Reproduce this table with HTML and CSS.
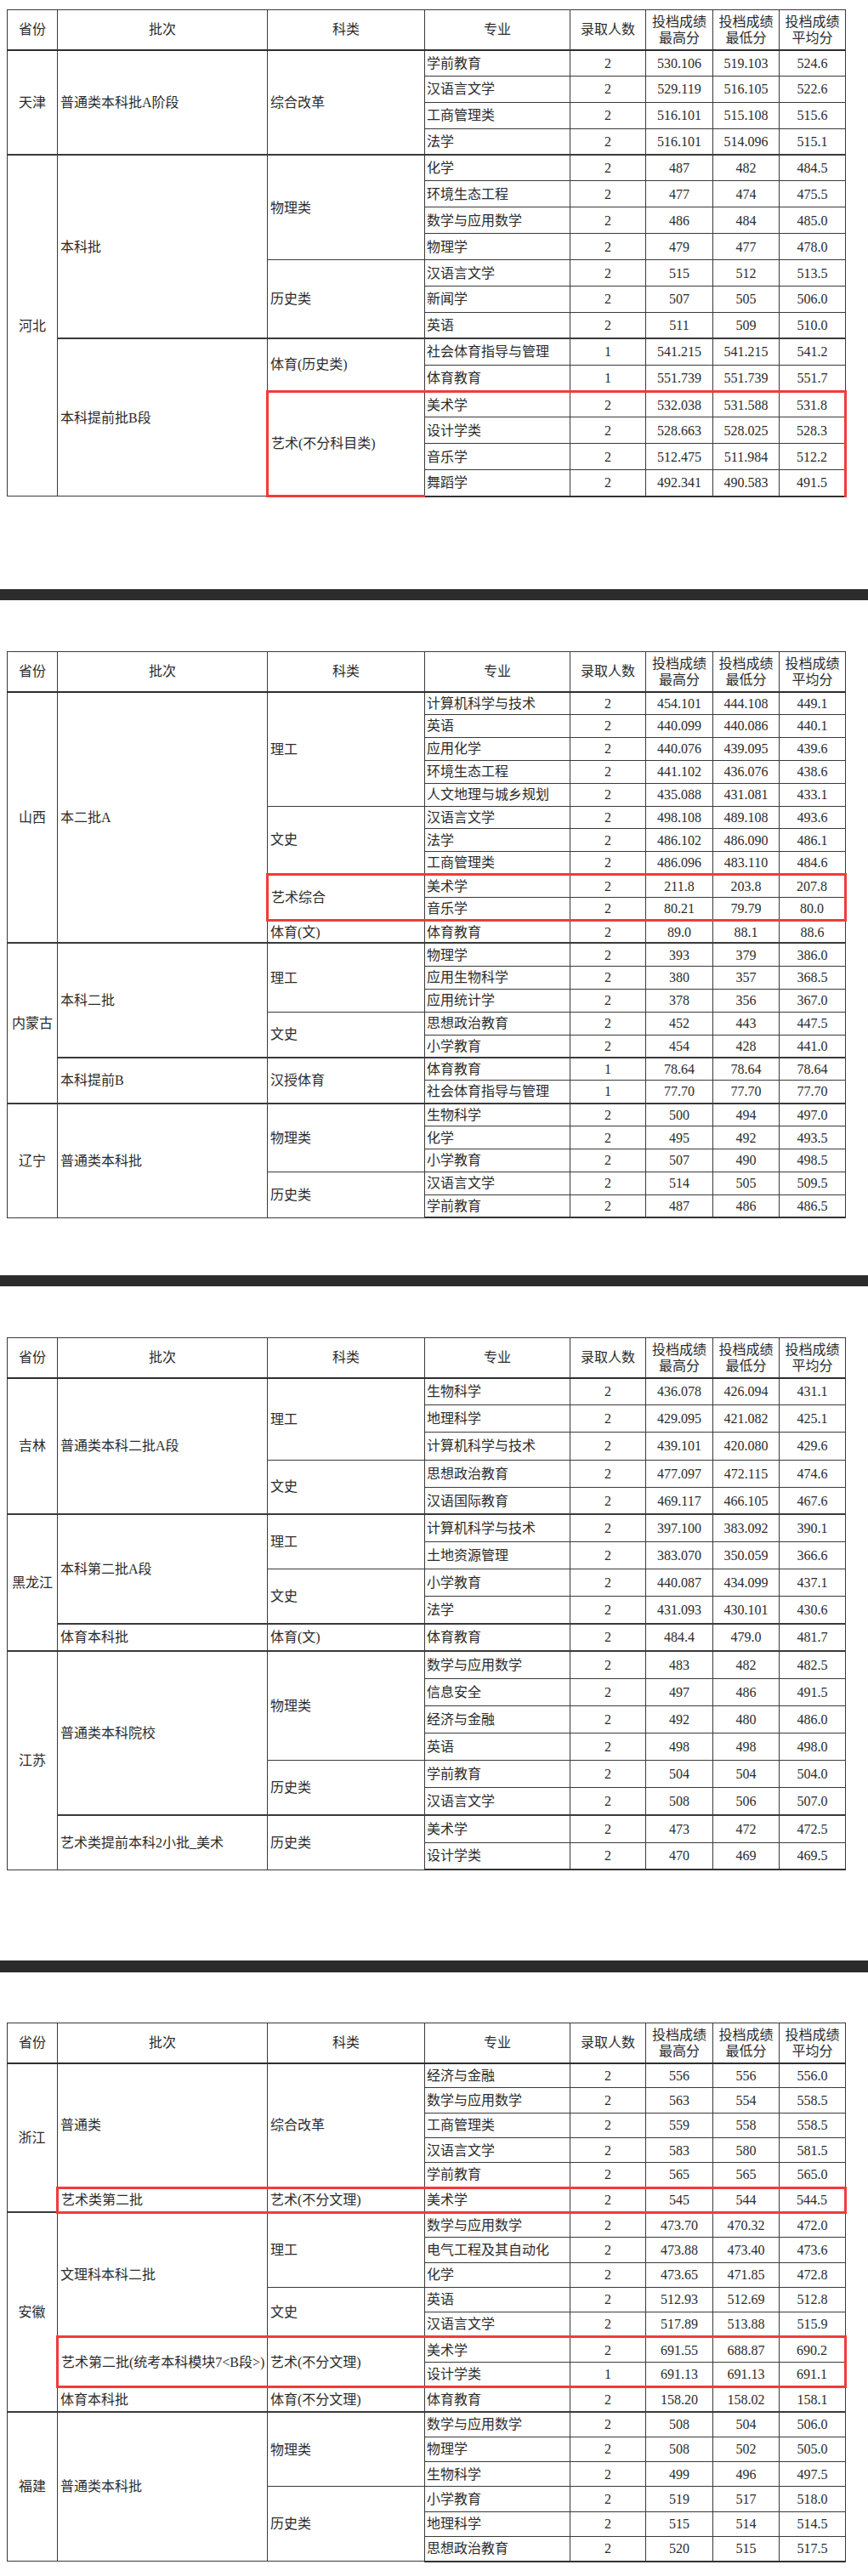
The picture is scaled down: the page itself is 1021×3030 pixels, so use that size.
FILE: index.html
```html
<!DOCTYPE html>
<html lang="zh-CN">
<head>
<meta charset="utf-8">
<title>各省录取分数</title>
<link rel="stylesheet" href="styles.css">
</head>
<body>
<main class="page">

<section class="sheet sheet-1">
<table class="score t1">
<colgroup><col class="w-prov"><col class="w-batch"><col class="w-type"><col class="w-major"><col class="w-num"><col class="w-s1"><col class="w-s2"><col class="w-s3"></colgroup>
<thead><tr><th>省份</th><th>批次</th><th>科类</th><th>专业</th><th>录取人数</th><th>投档成绩<br>最高分</th><th>投档成绩<br>最低分</th><th>投档成绩<br>平均分</th></tr></thead>
<tbody>
<tr><td class="c" rowspan="4">天津</td><td rowspan="4">普通类本科批A阶段</td><td rowspan="4">综合改革</td><td class="m">学前教育</td><td class="c">2</td><td class="c">530.106</td><td class="c">519.103</td><td class="c">524.6</td></tr>
<tr><td class="m">汉语言文学</td><td class="c">2</td><td class="c">529.119</td><td class="c">516.105</td><td class="c">522.6</td></tr>
<tr><td class="m">工商管理类</td><td class="c">2</td><td class="c">516.101</td><td class="c">515.108</td><td class="c">515.6</td></tr>
<tr><td class="m">法学</td><td class="c">2</td><td class="c">516.101</td><td class="c">514.096</td><td class="c">515.1</td></tr>
<tr class="grp"><td class="c" rowspan="13">河北</td><td rowspan="7">本科批</td><td rowspan="4">物理类</td><td class="m">化学</td><td class="c">2</td><td class="c">487</td><td class="c">482</td><td class="c">484.5</td></tr>
<tr><td class="m">环境生态工程</td><td class="c">2</td><td class="c">477</td><td class="c">474</td><td class="c">475.5</td></tr>
<tr><td class="m">数学与应用数学</td><td class="c">2</td><td class="c">486</td><td class="c">484</td><td class="c">485.0</td></tr>
<tr><td class="m">物理学</td><td class="c">2</td><td class="c">479</td><td class="c">477</td><td class="c">478.0</td></tr>
<tr><td rowspan="3">历史类</td><td class="m">汉语言文学</td><td class="c">2</td><td class="c">515</td><td class="c">512</td><td class="c">513.5</td></tr>
<tr><td class="m">新闻学</td><td class="c">2</td><td class="c">507</td><td class="c">505</td><td class="c">506.0</td></tr>
<tr><td class="m">英语</td><td class="c">2</td><td class="c">511</td><td class="c">509</td><td class="c">510.0</td></tr>
<tr class="grp"><td rowspan="6">本科提前批B段</td><td rowspan="2">体育(历史类)</td><td class="m">社会体育指导与管理</td><td class="c">1</td><td class="c">541.215</td><td class="c">541.215</td><td class="c">541.2</td></tr>
<tr><td class="m">体育教育</td><td class="c">1</td><td class="c">551.739</td><td class="c">551.739</td><td class="c">551.7</td></tr>
<tr><td class="rt rb rl" rowspan="4">艺术(不分科目类)</td><td class="m rt">美术学</td><td class="c rt">2</td><td class="c rt">532.038</td><td class="c rt">531.588</td><td class="c rt rr">531.8</td></tr>
<tr><td class="m">设计学类</td><td class="c">2</td><td class="c">528.663</td><td class="c">528.025</td><td class="c rr">528.3</td></tr>
<tr><td class="m">音乐学</td><td class="c">2</td><td class="c">512.475</td><td class="c">511.984</td><td class="c rr">512.2</td></tr>
<tr><td class="m rb">舞蹈学</td><td class="c rb">2</td><td class="c rb">492.341</td><td class="c rb">490.583</td><td class="c rb rr">491.5</td></tr>
</tbody>
</table>
</section>

<div class="divider divider-1"></div>

<section class="sheet sheet-2">
<table class="score t2">
<colgroup><col class="w-prov"><col class="w-batch"><col class="w-type"><col class="w-major"><col class="w-num"><col class="w-s1"><col class="w-s2"><col class="w-s3"></colgroup>
<thead><tr><th>省份</th><th>批次</th><th>科类</th><th>专业</th><th>录取人数</th><th>投档成绩<br>最高分</th><th>投档成绩<br>最低分</th><th>投档成绩<br>平均分</th></tr></thead>
<tbody>
<tr><td class="c" rowspan="11">山西</td><td rowspan="11">本二批A</td><td rowspan="5">理工</td><td class="m">计算机科学与技术</td><td class="c">2</td><td class="c">454.101</td><td class="c">444.108</td><td class="c">449.1</td></tr>
<tr><td class="m">英语</td><td class="c">2</td><td class="c">440.099</td><td class="c">440.086</td><td class="c">440.1</td></tr>
<tr><td class="m">应用化学</td><td class="c">2</td><td class="c">440.076</td><td class="c">439.095</td><td class="c">439.6</td></tr>
<tr><td class="m">环境生态工程</td><td class="c">2</td><td class="c">441.102</td><td class="c">436.076</td><td class="c">438.6</td></tr>
<tr><td class="m">人文地理与城乡规划</td><td class="c">2</td><td class="c">435.088</td><td class="c">431.081</td><td class="c">433.1</td></tr>
<tr><td rowspan="3">文史</td><td class="m">汉语言文学</td><td class="c">2</td><td class="c">498.108</td><td class="c">489.108</td><td class="c">493.6</td></tr>
<tr><td class="m">法学</td><td class="c">2</td><td class="c">486.102</td><td class="c">486.090</td><td class="c">486.1</td></tr>
<tr><td class="m">工商管理类</td><td class="c">2</td><td class="c">486.096</td><td class="c">483.110</td><td class="c">484.6</td></tr>
<tr><td class="rt rb rl" rowspan="2">艺术综合</td><td class="m rt">美术学</td><td class="c rt">2</td><td class="c rt">211.8</td><td class="c rt">203.8</td><td class="c rt rr">207.8</td></tr>
<tr><td class="m rb">音乐学</td><td class="c rb">2</td><td class="c rb">80.21</td><td class="c rb">79.79</td><td class="c rb rr">80.0</td></tr>
<tr><td>体育(文)</td><td class="m">体育教育</td><td class="c">2</td><td class="c">89.0</td><td class="c">88.1</td><td class="c">88.6</td></tr>
<tr class="grp"><td class="c" rowspan="7">内蒙古</td><td rowspan="5">本科二批</td><td rowspan="3">理工</td><td class="m">物理学</td><td class="c">2</td><td class="c">393</td><td class="c">379</td><td class="c">386.0</td></tr>
<tr><td class="m">应用生物科学</td><td class="c">2</td><td class="c">380</td><td class="c">357</td><td class="c">368.5</td></tr>
<tr><td class="m">应用统计学</td><td class="c">2</td><td class="c">378</td><td class="c">356</td><td class="c">367.0</td></tr>
<tr><td rowspan="2">文史</td><td class="m">思想政治教育</td><td class="c">2</td><td class="c">452</td><td class="c">443</td><td class="c">447.5</td></tr>
<tr><td class="m">小学教育</td><td class="c">2</td><td class="c">454</td><td class="c">428</td><td class="c">441.0</td></tr>
<tr class="grp"><td rowspan="2">本科提前B</td><td rowspan="2">汉授体育</td><td class="m">体育教育</td><td class="c">1</td><td class="c">78.64</td><td class="c">78.64</td><td class="c">78.64</td></tr>
<tr><td class="m">社会体育指导与管理</td><td class="c">1</td><td class="c">77.70</td><td class="c">77.70</td><td class="c">77.70</td></tr>
<tr class="grp"><td class="c" rowspan="5">辽宁</td><td rowspan="5">普通类本科批</td><td rowspan="3">物理类</td><td class="m">生物科学</td><td class="c">2</td><td class="c">500</td><td class="c">494</td><td class="c">497.0</td></tr>
<tr><td class="m">化学</td><td class="c">2</td><td class="c">495</td><td class="c">492</td><td class="c">493.5</td></tr>
<tr><td class="m">小学教育</td><td class="c">2</td><td class="c">507</td><td class="c">490</td><td class="c">498.5</td></tr>
<tr><td rowspan="2">历史类</td><td class="m">汉语言文学</td><td class="c">2</td><td class="c">514</td><td class="c">505</td><td class="c">509.5</td></tr>
<tr><td class="m">学前教育</td><td class="c">2</td><td class="c">487</td><td class="c">486</td><td class="c">486.5</td></tr>
</tbody>
</table>
</section>

<div class="divider divider-2"></div>

<section class="sheet sheet-3">
<table class="score t3">
<colgroup><col class="w-prov"><col class="w-batch"><col class="w-type"><col class="w-major"><col class="w-num"><col class="w-s1"><col class="w-s2"><col class="w-s3"></colgroup>
<thead><tr><th>省份</th><th>批次</th><th>科类</th><th>专业</th><th>录取人数</th><th>投档成绩<br>最高分</th><th>投档成绩<br>最低分</th><th>投档成绩<br>平均分</th></tr></thead>
<tbody>
<tr><td class="c" rowspan="5">吉林</td><td rowspan="5">普通类本科二批A段</td><td rowspan="3">理工</td><td class="m">生物科学</td><td class="c">2</td><td class="c">436.078</td><td class="c">426.094</td><td class="c">431.1</td></tr>
<tr><td class="m">地理科学</td><td class="c">2</td><td class="c">429.095</td><td class="c">421.082</td><td class="c">425.1</td></tr>
<tr><td class="m">计算机科学与技术</td><td class="c">2</td><td class="c">439.101</td><td class="c">420.080</td><td class="c">429.6</td></tr>
<tr><td rowspan="2">文史</td><td class="m">思想政治教育</td><td class="c">2</td><td class="c">477.097</td><td class="c">472.115</td><td class="c">474.6</td></tr>
<tr><td class="m">汉语国际教育</td><td class="c">2</td><td class="c">469.117</td><td class="c">466.105</td><td class="c">467.6</td></tr>
<tr class="grp"><td class="c" rowspan="5">黑龙江</td><td rowspan="4">本科第二批A段</td><td rowspan="2">理工</td><td class="m">计算机科学与技术</td><td class="c">2</td><td class="c">397.100</td><td class="c">383.092</td><td class="c">390.1</td></tr>
<tr><td class="m">土地资源管理</td><td class="c">2</td><td class="c">383.070</td><td class="c">350.059</td><td class="c">366.6</td></tr>
<tr><td rowspan="2">文史</td><td class="m">小学教育</td><td class="c">2</td><td class="c">440.087</td><td class="c">434.099</td><td class="c">437.1</td></tr>
<tr><td class="m">法学</td><td class="c">2</td><td class="c">431.093</td><td class="c">430.101</td><td class="c">430.6</td></tr>
<tr class="grp"><td>体育本科批</td><td>体育(文)</td><td class="m">体育教育</td><td class="c">2</td><td class="c">484.4</td><td class="c">479.0</td><td class="c">481.7</td></tr>
<tr class="grp"><td class="c" rowspan="8">江苏</td><td rowspan="6">普通类本科院校</td><td rowspan="4">物理类</td><td class="m">数学与应用数学</td><td class="c">2</td><td class="c">483</td><td class="c">482</td><td class="c">482.5</td></tr>
<tr><td class="m">信息安全</td><td class="c">2</td><td class="c">497</td><td class="c">486</td><td class="c">491.5</td></tr>
<tr><td class="m">经济与金融</td><td class="c">2</td><td class="c">492</td><td class="c">480</td><td class="c">486.0</td></tr>
<tr><td class="m">英语</td><td class="c">2</td><td class="c">498</td><td class="c">498</td><td class="c">498.0</td></tr>
<tr><td rowspan="2">历史类</td><td class="m">学前教育</td><td class="c">2</td><td class="c">504</td><td class="c">504</td><td class="c">504.0</td></tr>
<tr><td class="m">汉语言文学</td><td class="c">2</td><td class="c">508</td><td class="c">506</td><td class="c">507.0</td></tr>
<tr class="grp"><td rowspan="2">艺术类提前本科2小批_美术</td><td rowspan="2">历史类</td><td class="m">美术学</td><td class="c">2</td><td class="c">473</td><td class="c">472</td><td class="c">472.5</td></tr>
<tr><td class="m">设计学类</td><td class="c">2</td><td class="c">470</td><td class="c">469</td><td class="c">469.5</td></tr>
</tbody>
</table>
</section>

<div class="divider divider-3"></div>

<section class="sheet sheet-4">
<table class="score t4">
<colgroup><col class="w-prov"><col class="w-batch"><col class="w-type"><col class="w-major"><col class="w-num"><col class="w-s1"><col class="w-s2"><col class="w-s3"></colgroup>
<thead><tr><th>省份</th><th>批次</th><th>科类</th><th>专业</th><th>录取人数</th><th>投档成绩<br>最高分</th><th>投档成绩<br>最低分</th><th>投档成绩<br>平均分</th></tr></thead>
<tbody>
<tr><td class="c" rowspan="6">浙江</td><td rowspan="5">普通类</td><td rowspan="5">综合改革</td><td class="m">经济与金融</td><td class="c">2</td><td class="c">556</td><td class="c">556</td><td class="c">556.0</td></tr>
<tr><td class="m">数学与应用数学</td><td class="c">2</td><td class="c">563</td><td class="c">554</td><td class="c">558.5</td></tr>
<tr><td class="m">工商管理类</td><td class="c">2</td><td class="c">559</td><td class="c">558</td><td class="c">558.5</td></tr>
<tr><td class="m">汉语言文学</td><td class="c">2</td><td class="c">583</td><td class="c">580</td><td class="c">581.5</td></tr>
<tr><td class="m">学前教育</td><td class="c">2</td><td class="c">565</td><td class="c">565</td><td class="c">565.0</td></tr>
<tr><td class="rt rb rl">艺术类第二批</td><td class="rt rb">艺术(不分文理)</td><td class="m rt rb">美术学</td><td class="c rt rb">2</td><td class="c rt rb">545</td><td class="c rt rb">544</td><td class="c rt rb rr">544.5</td></tr>
<tr class="grp"><td class="c" rowspan="8">安徽</td><td rowspan="5">文理科本科二批</td><td rowspan="3">理工</td><td class="m">数学与应用数学</td><td class="c">2</td><td class="c">473.70</td><td class="c">470.32</td><td class="c">472.0</td></tr>
<tr><td class="m">电气工程及其自动化</td><td class="c">2</td><td class="c">473.88</td><td class="c">473.40</td><td class="c">473.6</td></tr>
<tr><td class="m">化学</td><td class="c">2</td><td class="c">473.65</td><td class="c">471.85</td><td class="c">472.8</td></tr>
<tr><td rowspan="2">文史</td><td class="m">英语</td><td class="c">2</td><td class="c">512.93</td><td class="c">512.69</td><td class="c">512.8</td></tr>
<tr><td class="m">汉语言文学</td><td class="c">2</td><td class="c">517.89</td><td class="c">513.88</td><td class="c">515.9</td></tr>
<tr><td class="rt rb rl" rowspan="2">艺术第二批(统考本科模块7&lt;B段&gt;)</td><td class="rt rb" rowspan="2">艺术(不分文理)</td><td class="m rt">美术学</td><td class="c rt">2</td><td class="c rt">691.55</td><td class="c rt">688.87</td><td class="c rt rr">690.2</td></tr>
<tr><td class="m rb">设计学类</td><td class="c rb">1</td><td class="c rb">691.13</td><td class="c rb">691.13</td><td class="c rb rr">691.1</td></tr>
<tr><td>体育本科批</td><td>体育(不分文理)</td><td class="m">体育教育</td><td class="c">2</td><td class="c">158.20</td><td class="c">158.02</td><td class="c">158.1</td></tr>
<tr class="grp"><td class="c" rowspan="6">福建</td><td rowspan="6">普通类本科批</td><td rowspan="3">物理类</td><td class="m">数学与应用数学</td><td class="c">2</td><td class="c">508</td><td class="c">504</td><td class="c">506.0</td></tr>
<tr><td class="m">物理学</td><td class="c">2</td><td class="c">508</td><td class="c">502</td><td class="c">505.0</td></tr>
<tr><td class="m">生物科学</td><td class="c">2</td><td class="c">499</td><td class="c">496</td><td class="c">497.5</td></tr>
<tr><td rowspan="3">历史类</td><td class="m">小学教育</td><td class="c">2</td><td class="c">519</td><td class="c">517</td><td class="c">518.0</td></tr>
<tr><td class="m">地理科学</td><td class="c">2</td><td class="c">515</td><td class="c">514</td><td class="c">514.5</td></tr>
<tr><td class="m">思想政治教育</td><td class="c">2</td><td class="c">520</td><td class="c">515</td><td class="c">517.5</td></tr>
</tbody>
</table>
</section>

</main>
</body>
</html>
```

FILE: styles.css
```css
html, body {
  margin: 0;
  padding: 0;
  background: #ffffff;
}

body {
  font-family: "Liberation Serif", "Noto Sans CJK SC", serif;
  color: #2b2b2b;
}

.page {
  width: 1021px;
  padding-top: 11px;
}

.sheet {
  padding-left: 8px;
}

.score {
  border-collapse: collapse;
  table-layout: fixed;
  width: 986px;
  font-size: 16px;
}

.w-prov { width: 59px; }
.w-batch { width: 247px; }
.w-type { width: 185px; }
.w-major { width: 171px; }
.w-num { width: 89px; }
.w-s1 { width: 79px; }
.w-s2 { width: 78px; }
.w-s3 { width: 78px; }

.score th,
.score td {
  border: 1px solid #3a3a3a;
  padding: 0 3px;
  vertical-align: middle;
  text-align: left;
  white-space: nowrap;
  font-weight: normal;
  line-height: 19px;
  overflow: visible;
}

.score th {
  text-align: center;
  padding: 0;
}

.score thead tr { height: 47px; }
.score thead th { border-bottom: 2px solid #2e2e2e; }

.score .c { text-align: center; padding: 0; }
.score .m { padding-left: 2px; }

.score tr.grp > td { border-top: 2px solid #3a3a3a; }
.score tbody tr:last-child > td { border-bottom: 2px solid #333; }

.t1 tbody tr { height: 30.9px; }
.t2 tbody tr { height: 26.9px; }
.t3 tbody tr { height: 32.15px; }
.t4 tbody tr { height: 29.3px; }

/* red highlight frames */
.score td.rt { border-top: 3px solid #f23b3b; }
.score td.rb { border-bottom: 3px solid #f23b3b; }
.score td.rl { border-left: 3px solid #f23b3b; }
.score td.rr { border-right: 3px solid #f23b3b; }

.divider {
  height: 13px;
  background: #2c2c2c;
}

.divider-1 { margin: 108px 0 60px; }
.divider-2 { margin: 67px 0 60px; }
.divider-3 { margin: 106px 0 59px; height: 14px; }
```
